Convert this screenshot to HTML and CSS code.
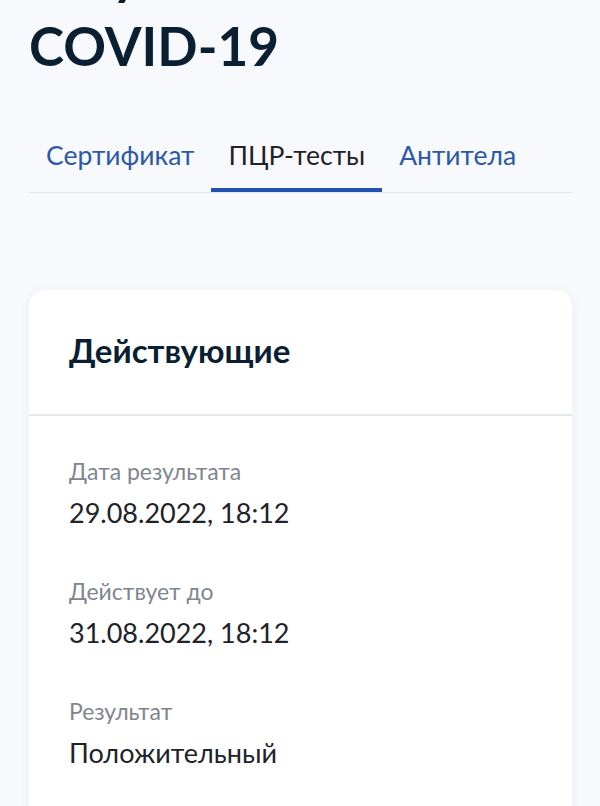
FILE: index.html
```html
<!DOCTYPE html>
<html lang="ru">
<head>
    <meta charset="UTF-8">
    <meta name="viewport" content="width=device-width, initial-scale=1.0">
    <title>Результаты COVID-19</title>
    <link rel="stylesheet" href="styles.css">
</head>
<body>
    <div class="page">
        <h1 class="page-title">Результаты тестов на COVID-19</h1>

        <div class="tabs">
            <a class="tab" href="#">Сертификат</a>
            <a class="tab tab-active" href="#">ПЦР-тесты</a>
            <a class="tab" href="#">Антитела</a>
        </div>

        <div class="card">
            <div class="card-header">Действующие</div>
            <div class="card-body">
                <div class="field">
                    <div class="field-label">Дата результата</div>
                    <div class="field-value">29.08.2022, 18:12</div>
                </div>
                <div class="field">
                    <div class="field-label">Действует до</div>
                    <div class="field-value">31.08.2022, 18:12</div>
                </div>
                <div class="field">
                    <div class="field-label">Результат</div>
                    <div class="field-value">Положительный</div>
                </div>
            </div>
        </div>
    </div>
</body>
</html>
```

FILE: styles.css
```css
body {
    font-family: Lato, "Noto Sans", sans-serif;
    background-color: #f7f9fc;
    color: #1e2329;
    margin: 0;
    overflow: hidden;
}
.page {
    padding: 0 28px 0 29px;
}
.page-title {
    font-size: 53px;
    font-weight: 700;
    line-height: 72px;
    color: #0b1f33;
    margin: -62px 0 0;
}
.tabs {
    display: flex;
    margin-top: 57px;
    border-bottom: 1px solid #e3e7ec;
}
.tab {
    font-size: 26.5px;
    line-height: 32px;
    color: #2b59a8;
    text-decoration: none;
    padding: 0 17px 17px;
    border-bottom: 4px solid transparent;
}
.tab-active {
    color: #1f2328;
    border-bottom-color: #2152b0;
}
.card {
    margin-top: 97px;
    background: #fff;
    border-radius: 16px;
    box-shadow: 0 2px 10px rgba(120, 140, 170, 0.12);
}
.card-header {
    font-size: 33px;
    font-weight: 700;
    line-height: 38px;
    color: #0b1f33;
    padding: 41px 40px 45px;
    border-bottom: 2px solid #e5e8ec;
}
.card-body {
    padding: 42px 40px 40px;
}
.field {
    margin-bottom: 49px;
}
.field-label {
    font-size: 23px;
    line-height: 26px;
    color: #80868e;
}
.field-value {
    font-size: 27px;
    line-height: 32px;
    margin-top: 13px;
    color: #1e2329;
}
```
